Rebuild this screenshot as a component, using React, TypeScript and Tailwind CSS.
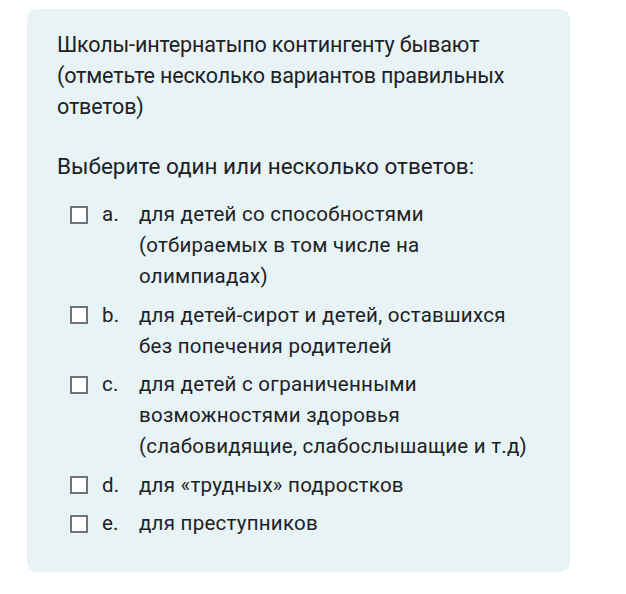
const options = [
  { letter: "a.", lines: ["для детей со способностями", "(отбираемых в том числе на", "олимпиадах)"] },
  { letter: "b.", lines: ["для детей-сирот и детей, оставшихся", "без попечения родителей"] },
  { letter: "c.", lines: ["для детей с ограниченными", "возможностями здоровья", "(слабовидящие, слабослышащие и т.д)"] },
  { letter: "d.", lines: ["для «трудных» подростков"] },
  { letter: "e.", lines: ["для преступников"] },
];

export default function App() {
  return (
    <div className="h-[594px] w-[626px] bg-white pl-[27px] pt-[9px] font-['Roboto',sans-serif] text-[#1d2125]">
      <div className="h-[563px] w-[543px] rounded-[10px] bg-[#e7f3f5] px-[30px] pt-[20px]">
        <p className="text-[21.5px] leading-[31px] tracking-[-0.15px]">
          Школы-интернатыпо контингенту бывают
          <br />
          (отметьте несколько вариантов правильных
          <br />
          ответов)
        </p>
        <p className="mt-[29px] text-[22.5px] leading-[31px]">Выберите один или несколько ответов:</p>
        <div className="mt-[17px] flex flex-col gap-[7.5px] pl-[13px]">
          {options.map((o) => (
            <div key={o.letter} className="flex items-start text-[20.5px] leading-[31px] tracking-[0.25px]">
              <div className="flex h-[31px] w-[32px] items-center">
                <span className="block h-[18px] w-[18px] border-2 border-[#6f7479] bg-white" />
              </div>
              <span className="w-[37px]">{o.letter}</span>
              <span>
                {o.lines.map((l, i) => (
                  <span key={i} className="block">
                    {l}
                  </span>
                ))}
              </span>
            </div>
          ))}
        </div>
      </div>
    </div>
  );
}
